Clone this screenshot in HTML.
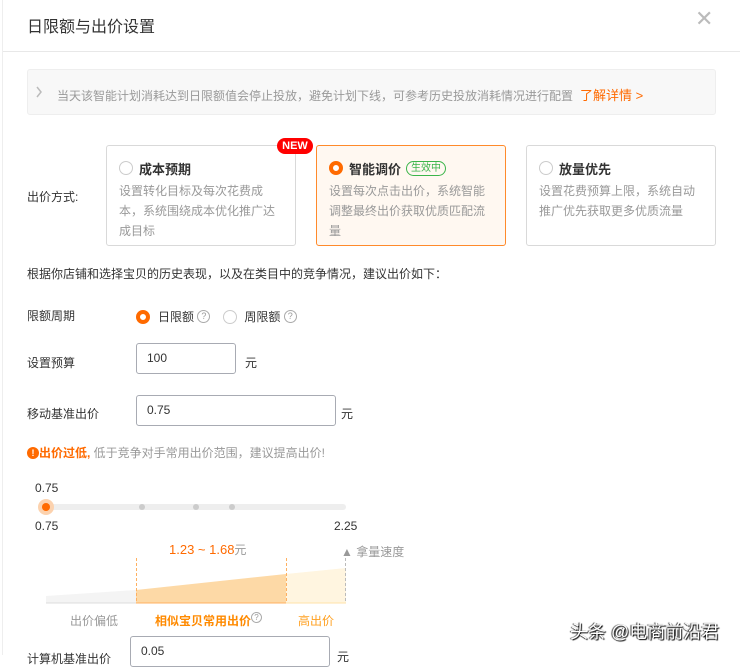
<!DOCTYPE html>
<html><head><meta charset="utf-8"><style>
*{margin:0;padding:0;box-sizing:border-box}
body{width:740px;height:655px;overflow:hidden;background:#fff;font-family:"Liberation Sans","Noto Sans CJK SC",sans-serif;font-size:12px;color:#333;position:relative}
.a{position:absolute;white-space:nowrap}
.card{position:absolute;top:145px;width:190px;height:101px;border:1px solid #d9d9d9;border-radius:3px;padding:12px 12px 0 12px}
.card .t{font-size:13px;font-weight:bold;color:#333;display:flex;align-items:center;height:20px}
.card .d{color:#999;line-height:20px;margin-top:3px;font-size:12px;white-space:normal}
.rad{display:inline-block;width:14px;height:14px;border-radius:50%;border:1px solid #ccc;margin-right:6px;background:#fff}
.rad.on{border:4px solid #ff6a00}
.inp{position:absolute;border:1px solid #a8abb3;border-radius:3px;padding-left:10px;font-size:12px;line-height:29px;color:#333}
.q{display:inline-block;width:13px;height:13px;border:1px solid #aaa;border-radius:50%;font-size:9px;color:#999;text-align:center;line-height:11px;vertical-align:middle}
</style></head><body>
<div class="a" style="left:2px;top:0;width:1px;height:655px;background:#eee"></div>
<div class="a" style="left:27px;top:13px;font-size:16px;color:#333">日限额与出价设置</div>
<div class="a" style="left:695px;top:6px;font-size:22px;color:#bbb;font-weight:300">✕</div>
<div class="a" style="left:3px;top:51px;width:737px;height:1px;background:#e8e8e8"></div>
<div class="a" style="left:27px;top:69px;width:689px;height:46px;background:#f8f8f8;border:1px solid #eee;border-radius:3px"></div>
<svg class="a" style="left:35px;top:85px" width="8" height="14"><path d="M2 2 L6 7 L2 12" stroke="#bbb" stroke-width="1.5" fill="none"/></svg>
<div class="a" style="left:57px;top:85px;color:#999">当天该智能计划消耗达到日限额值会停止投放，避免计划下线，可参考历史投放消耗情况进行配置 <span style="color:#ff6a00;font-size:13px">&nbsp;了解详情 &gt;</span></div>
<div class="a" style="left:27px;top:188px">出价方式:</div>
<div class="card" style="left:106px"><div class="t"><span class="rad"></span>成本预期</div><div class="d">设置转化目标及每次花费成本，系统围绕成本优化推广达成目标</div></div>
<div class="a" style="left:277px;top:138px;width:36px;height:16px;background:#f00;border-radius:8px;color:#fff;font-weight:bold;font-size:11px;text-align:center;line-height:16px">NEW</div>
<div class="card" style="left:316px;border-color:#ff8a2b;background:#fff8f1"><div class="t"><span class="rad on"></span>智能调价<span style="margin-left:5px;border:1px solid #3bb54a;color:#3bb54a;border-radius:8px;font-size:10px;font-weight:normal;padding:0 4px;line-height:13px">生效中</span></div><div class="d">设置每次点击出价，系统智能调整最终出价获取优质匹配流量</div></div>
<div class="card" style="left:526px"><div class="t"><span class="rad"></span>放量优先</div><div class="d">设置花费预算上限，系统自动推广优先获取更多优质流量</div></div>
<div class="a" style="left:27px;top:265px">根据你店铺和选择宝贝的历史表现，以及在类目中的竞争情况，建议出价如下：</div>
<div class="a" style="left:27px;top:307px">限额周期</div>
<div class="a" style="left:136px;top:308px;display:flex;align-items:center"><span class="rad on"></span><span style="margin-left:2px">日限额</span>&nbsp;<span class="q">?</span><span class="rad" style="margin-left:13px"></span><span style="margin-left:1px">周限额</span>&nbsp;<span class="q">?</span></div>
<div class="a" style="left:27px;top:354px">设置预算</div>
<div class="inp" style="left:136px;top:343px;width:100px;height:31px">100</div>
<div class="a" style="left:245px;top:354px">元</div>
<div class="a" style="left:27px;top:405px">移动基准出价</div>
<div class="inp" style="left:136px;top:395px;width:200px;height:31px">0.75</div>
<div class="a" style="left:341px;top:405px">元</div>
<div class="a" style="left:27px;top:444px;display:flex;align-items:center"><span style="display:inline-block;width:12px;height:12px;border-radius:50%;background:#ff6a00;color:#fff;font-size:9px;font-weight:bold;text-align:center;line-height:12px">!</span><span style="color:#ff6a00;font-weight:bold">出价过低,</span><span style="color:#999">&nbsp;低于竞争对手常用出价范围，建议提高出价!</span></div>
<div class="a" style="left:35px;top:481px;font-size:12px">0.75</div>
<div class="a" style="left:40px;top:504px;width:306px;height:6px;background:#eee;border-radius:3px"></div>
<div class="a" style="left:139px;top:504px;width:6px;height:6px;background:#ccc;border-radius:50%"></div>
<div class="a" style="left:193px;top:504px;width:6px;height:6px;background:#ccc;border-radius:50%"></div>
<div class="a" style="left:229px;top:504px;width:6px;height:6px;background:#ccc;border-radius:50%"></div>
<div class="a" style="left:38px;top:499px;width:16px;height:16px;background:#fcd2ae;border-radius:50%"></div>
<div class="a" style="left:42px;top:503px;width:8px;height:8px;background:#ff6a00;border-radius:50%"></div>
<div class="a" style="left:35px;top:519px">0.75</div>
<div class="a" style="left:334px;top:519px">2.25</div>
<div class="a" style="left:169px;top:541px;color:#ff6a00;font-size:13px">1.23 ~ 1.68<span style="color:#999;font-size:12px">元</span></div>
<div class="a" style="left:341px;top:543px;color:#999">▲ 拿量速度</div>
<svg class="a" style="left:0;top:550px" width="400" height="60">
<polygon points="46,53 46,46 136,40 136,53" fill="#f4f4f4"/>
<polygon points="136,53 136,40 286,24 286,53" fill="#fdd9a6"/>
<polygon points="286,53 286,24 346,18 346,53" fill="#fff5e0"/>
<line x1="46" y1="53" x2="346" y2="53" stroke="#ddd"/>
<line x1="136" y1="53" x2="286" y2="53" stroke="#ffb060"/>
<line x1="286" y1="53" x2="346" y2="53" stroke="#ffe2a8"/>
<line x1="136.5" y1="8" x2="136.5" y2="53" stroke="#ffb060" stroke-dasharray="3,2"/>
<line x1="286.5" y1="8" x2="286.5" y2="53" stroke="#ffb060" stroke-dasharray="3,2"/>
<line x1="345.5" y1="8" x2="345.5" y2="53" stroke="#bbb" stroke-dasharray="3,2"/>
</svg>
<div class="a" style="left:70px;top:612px;color:#999">出价偏低</div>
<div class="a" style="left:155px;top:612px;color:#ff8a00;font-weight:bold">相似宝贝常用出价<span class="q" style="width:11px;height:11px;font-size:8px;line-height:9px;vertical-align:top;font-weight:normal">?</span></div>
<div class="a" style="left:298px;top:612px;color:#ffa020">高出价</div>
<div class="a" style="left:27px;top:650px">计算机基准出价</div>
<div class="inp" style="left:130px;top:636px;width:200px;height:31px">0.05</div>
<div class="a" style="left:337px;top:648px">元</div>
<div class="a" style="left:570px;top:618px;font-size:18px;color:#fff;text-shadow:1px 1px 1px #000,-1px 0 1px #333">头条 @电商前沿君</div>
</body></html>
